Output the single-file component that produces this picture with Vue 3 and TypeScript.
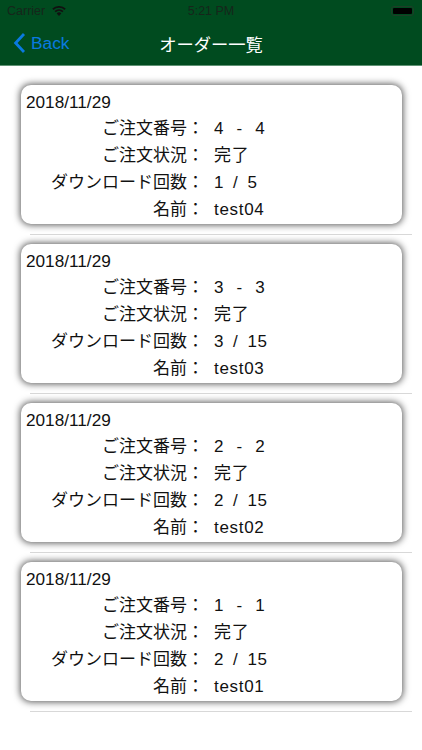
<script setup lang="ts">
interface Order { date: string; no: string; status: string; count: string; name: string }
const orders: Order[] = [
  { date: '2018/11/29', no: '4 - 4', status: '完了', count: '1 / 5', name: 'test04' },
  { date: '2018/11/29', no: '3 - 3', status: '完了', count: '3 / 15', name: 'test03' },
  { date: '2018/11/29', no: '2 - 2', status: '完了', count: '2 / 15', name: 'test02' },
  { date: '2018/11/29', no: '1 - 1', status: '完了', count: '2 / 15', name: 'test01' },
]
</script>

<template>
  <div class="screen">
    <header class="nav">
      <div class="status">
        <div class="status-left">
          <span>Carrier</span>
          <svg class="wifi" width="14" height="10" viewBox="0 0 14 10">
            <path d="M7 10 L4.7 7.4 A3.4 3.4 0 0 1 9.3 7.4 Z" fill="#111" />
            <path d="M3.7 6.3 L2.5 5 A6.6 6.6 0 0 1 11.5 5 L10.3 6.3 A4.9 4.9 0 0 0 3.7 6.3 Z" fill="#111" />
            <path d="M1.5 3.9 L0.3 2.6 A9.9 9.9 0 0 1 13.7 2.6 L12.5 3.9 A8.2 8.2 0 0 0 1.5 3.9 Z" fill="#111" />
          </svg>
        </div>
        <span class="time">5:21 PM</span>
        <div class="battery"><i></i></div>
      </div>
      <div class="bar">
        <div class="back">
          <svg width="13" height="22" viewBox="0 0 13 22">
            <path d="M11 2 L2.6 11 L11 20" fill="none" stroke="#0a7ae0" stroke-width="2.8" />
          </svg>
          <span>Back</span>
        </div>
        <h1 class="title">オーダー一覧</h1>
      </div>
    </header>
    <ul class="list">
      <li v-for="o in orders" :key="o.name" class="row">
        <article class="card">
          <div class="date">{{ o.date }}</div>
          <dl class="info">
            <dt>ご注文番号：</dt><dd class="number">{{ o.no }}</dd>
            <dt>ご注文状況：</dt><dd>{{ o.status }}</dd>
            <dt>ダウンロード回数：</dt><dd class="count">{{ o.count }}</dd>
            <dt>名前：</dt><dd>{{ o.name }}</dd>
          </dl>
        </article>
      </li>
    </ul>
  </div>
</template>

<style scoped>
.screen {
  width: 422px;
  height: 750px;
  overflow: hidden;
  background: #fff;
  color: #111;
  font-family: "Liberation Sans", "Noto Sans CJK JP", sans-serif;
}
.nav {
  height: 65px;
  background: #004b1f;
  border-bottom: 1px solid #5f9274;
}
.status {
  height: 21px;
  padding: 0 7px;
  display: grid;
  grid-template-columns: 1fr auto 1fr;
  align-items: center;
  font-size: 12.5px;
  color: #16261b;
}
.status-left {
  display: flex;
  align-items: center;
  gap: 7px;
}
.time {
  font-size: 12.5px;
}
.battery {
  justify-self: end;
  width: 23px;
  height: 10px;
  margin-right: 1px;
  padding: 1px;
  border: 1px solid #1f3d28;
  border-radius: 3px;
  box-sizing: border-box;
}
.battery i {
  display: block;
  height: 100%;
  background: #000;
  border-radius: 1px;
}
.bar {
  position: relative;
  height: 44px;
  display: flex;
  align-items: center;
  justify-content: center;
}
.back {
  position: absolute;
  left: 13px;
  top: 0;
  height: 44px;
  display: flex;
  align-items: center;
  gap: 5px;
  color: #0a7ae0;
  font-size: 17.3px;
}
.title {
  margin: 0;
  color: #fff;
  font-size: 17.3px;
  font-weight: 400;
}
.list {
  list-style: none;
  margin: 0;
  padding: 10px 0 0;
}
.row {
  height: 159px;
  box-sizing: border-box;
  padding: 9px 20px 0 21px;
  position: relative;
}
.row::after {
  content: "";
  position: absolute;
  left: 30px;
  right: 10px;
  bottom: 0;
  height: 1px;
  background: #d8d8d8;
}
.card {
  height: 139px;
  box-sizing: border-box;
  padding: 6px 5px 0;
  background: #fff;
  border-radius: 10px;
  box-shadow: 0 0 7px 1px rgba(0, 0, 0, 0.65);
}
.date {
  font-size: 17.2px;
  line-height: 22px;
}
.info {
  margin: 2px 0 0;
  display: grid;
  grid-template-columns: 178px 1fr;
  grid-auto-rows: 27px;
  column-gap: 10px;
  font-size: 17px;
  line-height: 27px;
}
.info dt {
  text-align: right;
  white-space: nowrap;
}
.info dd {
  margin: 0;
  letter-spacing: 0.7px;
}
.number {
  white-space: pre;
  word-spacing: 7px;
}
.count {
  white-space: pre;
  word-spacing: 3.5px;
}
</style>
